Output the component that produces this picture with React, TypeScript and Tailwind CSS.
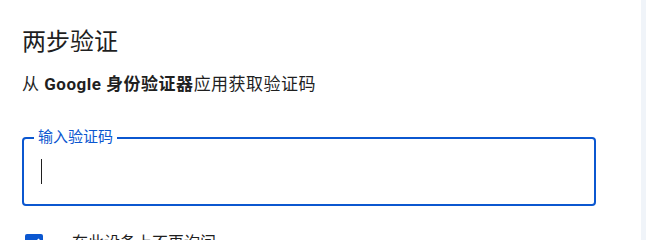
import { Check } from "lucide-react";

export default function App() {
  return (
    <div
      className="flex h-[240px] w-[646px] overflow-hidden bg-white"
      style={{ fontFamily: '"Roboto", "Noto Sans CJK SC", sans-serif' }}
    >
      <div className="flex-1 pl-[22px] pr-[45px] pt-[26px]">
        <h1 className="text-[24px] leading-[32px] font-normal text-[#1f1f1f]">
          两步验证
        </h1>
        <p className="mt-[14px] text-[17px] leading-[24px] tracking-[0.5px] text-[#1f1f1f]">
          从 <span className="font-bold">Google 身份验证器</span>应用获取验证码
        </p>

        <div className="relative mt-[41px] h-[69px] rounded-[4px] border-2 border-[#0b57d0]">
          <span className="absolute -top-[12px] left-[10px] bg-white px-[4px] text-[15px] leading-[20px] text-[#0b57d0]">
            输入验证码
          </span>
          <div className="flex h-full items-center pl-[17px]">
            <div className="h-[25px] w-px bg-[#1f1f1f]" />
          </div>
        </div>

        <div className="mt-[25px] flex items-center">
          <div className="ml-[3px] flex h-[18px] w-[18px] items-center justify-center rounded-[2px] bg-[#0b57d0]">
            <Check className="h-[14px] w-[14px] text-white" strokeWidth={3} />
          </div>
          <span className="ml-[29px] text-[16px] leading-[24px] text-[#1f1f1f]">
            在此设备上不再询问
          </span>
        </div>
      </div>
      <div className="w-[5px] bg-[#f0f4f9]" />
    </div>
  );
}
